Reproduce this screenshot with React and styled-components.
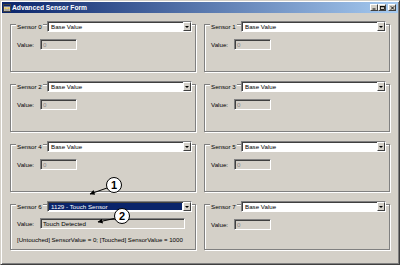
import React from 'react';
import styled, { createGlobalStyle } from 'styled-components';

const Global = createGlobalStyle`
  html, body { margin: 0; padding: 0; background: #d4d0c8; }
  body { font-family: "Liberation Sans", Arial, sans-serif; }
`;

const Window = styled.div`
  position: relative;
  width: 400px;
  height: 265px;
  box-sizing: border-box;
  background: #d4d0c8;
  border: 1px solid;
  border-color: #d4d0c8 #404040 #404040 #d4d0c8;
  box-shadow: inset 1px 1px 0 #fff, inset -1px -1px 0 #808080;
  padding: 1px;
  display: flex;
  flex-direction: column;
  font-size: 6.2px;
  color: #000;
  overflow: hidden;
`;

const TitleBar = styled.div`
  height: 11px;
  flex-shrink: 0;
  display: flex;
  align-items: center;
  gap: 1px;
  padding: 0 2px 0 1px;
  background: linear-gradient(to right, #0a246a, #a6caf0);
`;

const TitleText = styled.span`
  flex: 1;
  color: #fff;
  font-weight: bold;
  font-size: 6.7px;
  white-space: nowrap;
`;

const Controls = styled.div`
  display: flex;
  align-items: center;
`;

const CtrlButton = styled.div`
  width: 8px;
  height: 7px;
  box-sizing: border-box;
  background: #d4d0c8;
  border: 1px solid;
  border-color: #fff #404040 #404040 #fff;
  display: flex;
  align-items: center;
  justify-content: center;
  margin-left: ${p => (p.$gap ? '2px' : '0')};
`;

const Client = styled.div`
  flex: 1;
  display: grid;
  grid-template-columns: 186px 186px;
  grid-template-rows: 48px 48px 48px 46px;
  column-gap: 8px;
  row-gap: 12px;
  padding: 11px 0 0 8px;
`;

const Group = styled.div`
  box-sizing: border-box;
  border: 1px solid #808080;
  box-shadow: inset 1px 1px 0 #fff, 1px 1px 0 #fff;
  padding: 0 3px 0 5px;
  display: flex;
  flex-direction: column;
`;

const Header = styled.div`
  margin-top: -4px;
  height: 11px;
  display: flex;
  align-items: center;
`;

const LabelCell = styled.div`
  width: 31px;
  flex-shrink: 0;
  display: flex;
  align-items: center;
`;

const LabelText = styled.span`
  background: #d4d0c8;
  padding: 0 1px;
  line-height: 8px;
  white-space: nowrap;
`;

const Combo = styled.div`
  flex: 1;
  height: 11px;
  box-sizing: border-box;
  background: #fff;
  border: 1px solid;
  border-color: #808080 #fff #fff #808080;
  box-shadow: inset 1px 1px 0 #404040;
  display: flex;
  align-items: stretch;
  padding: 1px 0 0 1px;
`;

const ComboText = styled.div`
  flex: 1;
  display: flex;
  align-items: center;
  padding-left: 2px;
  margin: 0 1px 1px 0;
  white-space: nowrap;
  background: ${p => (p.$selected ? '#0a246a' : 'transparent')};
  color: ${p => (p.$selected ? '#fff' : '#000')};
`;

const DropButton = styled.div`
  width: 8px;
  box-sizing: border-box;
  background: #d4d0c8;
  border: 1px solid;
  border-color: #fff #404040 #404040 #fff;
  display: flex;
  align-items: center;
  justify-content: center;
  margin-top: -1px;
`;

const Arrow = styled.div`
  width: 0;
  height: 0;
  border-left: 2px solid transparent;
  border-right: 2px solid transparent;
  border-top: 2px solid #000;
`;

const ValueRow = styled.div`
  margin-top: ${p => (p.$tight ? '6px' : '7px')};
  height: 11px;
  display: flex;
  align-items: center;
`;

const ValueLabel = styled.span`
  width: 23px;
  flex-shrink: 0;
  padding-left: 1px;
  white-space: nowrap;
`;

const TextBox = styled.div`
  width: ${p => (p.$wide ? '145px' : '37px')};
  height: 11px;
  box-sizing: border-box;
  border: 1px solid;
  border-color: #808080 #fff #fff #808080;
  box-shadow: inset 1px 1px 0 #404040;
  background: #d4d0c8;
  display: flex;
  align-items: center;
  padding-left: 2px;
  color: ${p => (p.$active ? '#000' : '#8a8a8a')};
  white-space: nowrap;
`;

const Hint = styled.div`
  margin-top: 7px;
  padding-left: 1px;
  font-size: 6.1px;
  line-height: 7px;
  white-space: nowrap;
`;

const Badge = styled.div`
  position: absolute;
  left: ${p => p.$x}px;
  top: ${p => p.$y}px;
  width: 16px;
  height: 16px;
  box-sizing: border-box;
  border: 1.5px solid #000;
  border-radius: 50%;
  background: #fff;
  display: flex;
  align-items: center;
  justify-content: center;
  font-weight: bold;
  font-size: 11px;
  line-height: 1;
  color: #000;
`;

const ArrowLayer = styled.svg`
  position: absolute;
  left: 0;
  top: 0;
  width: 400px;
  height: 265px;
  pointer-events: none;
`;

const sensors = [0, 1, 2, 3, 4, 5, 6, 7].map(i =>
  i === 6
    ? {
        id: i,
        selection: '1129 - Touch Sensor',
        selected: true,
        value: 'Touch Detected',
        active: true,
        hint: '[Untouched] SensorValue = 0; [Touched] SensorValue = 1000',
      }
    : { id: i, selection: 'Base Value', value: '0' }
);

const AppIcon = () => (
  <svg width="8" height="8" viewBox="0 0 8 8">
    <rect x="0.5" y="0.5" width="7" height="7" fill="#d4d0c8" stroke="#404040" strokeWidth="1" />
    <rect x="1" y="1" width="6" height="1.5" fill="#0a246a" />
    <rect x="1.5" y="3.5" width="2" height="1.5" fill="#e8c040" />
    <rect x="4.5" y="3.5" width="2" height="1.5" fill="#e8c040" />
    <rect x="1.5" y="5.5" width="5" height="1" fill="#808080" />
  </svg>
);

const MinGlyph = () => (
  <svg width="5" height="4" viewBox="0 0 5 4">
    <rect x="0.5" y="2.5" width="3" height="1" fill="#000" />
  </svg>
);
const MaxGlyph = () => (
  <svg width="5" height="4" viewBox="0 0 5 4">
    <rect x="0.5" y="0.5" width="4" height="3" fill="none" stroke="#000" strokeWidth="0.8" />
    <rect x="0.5" y="0.3" width="4" height="0.9" fill="#000" />
  </svg>
);
const CloseGlyph = () => (
  <svg width="5" height="4" viewBox="0 0 5 4">
    <path d="M0.8 0.3 L4.2 3.7 M4.2 0.3 L0.8 3.7" stroke="#000" strokeWidth="0.9" />
  </svg>
);

const SensorGroup = ({ s }) => (
  <Group>
    <Header>
      <LabelCell>
        <LabelText>Sensor {s.id}</LabelText>
      </LabelCell>
      <Combo>
        <ComboText $selected={s.selected}>{s.selection}</ComboText>
        <DropButton>
          <Arrow />
        </DropButton>
      </Combo>
    </Header>
    <ValueRow $tight={!!s.hint}>
      <ValueLabel>Value:</ValueLabel>
      <TextBox $wide={s.active} $active={s.active}>{s.value}</TextBox>
    </ValueRow>
    {s.hint && <Hint>{s.hint}</Hint>}
  </Group>
);

export default function App() {
  return (
    <>
      <Global />
      <Window>
        <TitleBar>
          <AppIcon />
          <TitleText>Advanced Sensor Form</TitleText>
          <Controls>
            <CtrlButton><MinGlyph /></CtrlButton>
            <CtrlButton><MaxGlyph /></CtrlButton>
            <CtrlButton $gap><CloseGlyph /></CtrlButton>
          </Controls>
        </TitleBar>
        <Client>
          {sensors.map(s => (
            <SensorGroup key={s.id} s={s} />
          ))}
        </Client>
        <ArrowLayer viewBox="0 0 400 265">
          <defs>
            <marker id="head" viewBox="0 0 6 6" refX="5.5" refY="3" markerWidth="5" markerHeight="5" orient="auto">
              <path d="M0 0 L6 3 L0 6 Z" fill="#000" />
            </marker>
          </defs>
          <line x1="106" y1="187" x2="89" y2="193" stroke="#000" strokeWidth="1" markerEnd="url(#head)" />
          <line x1="113.5" y1="217.5" x2="97" y2="221" stroke="#000" strokeWidth="1" markerEnd="url(#head)" />
        </ArrowLayer>
        <Badge $x={105} $y={176}>1</Badge>
        <Badge $x={113} $y={207}>2</Badge>
      </Window>
    </>
  );
}
